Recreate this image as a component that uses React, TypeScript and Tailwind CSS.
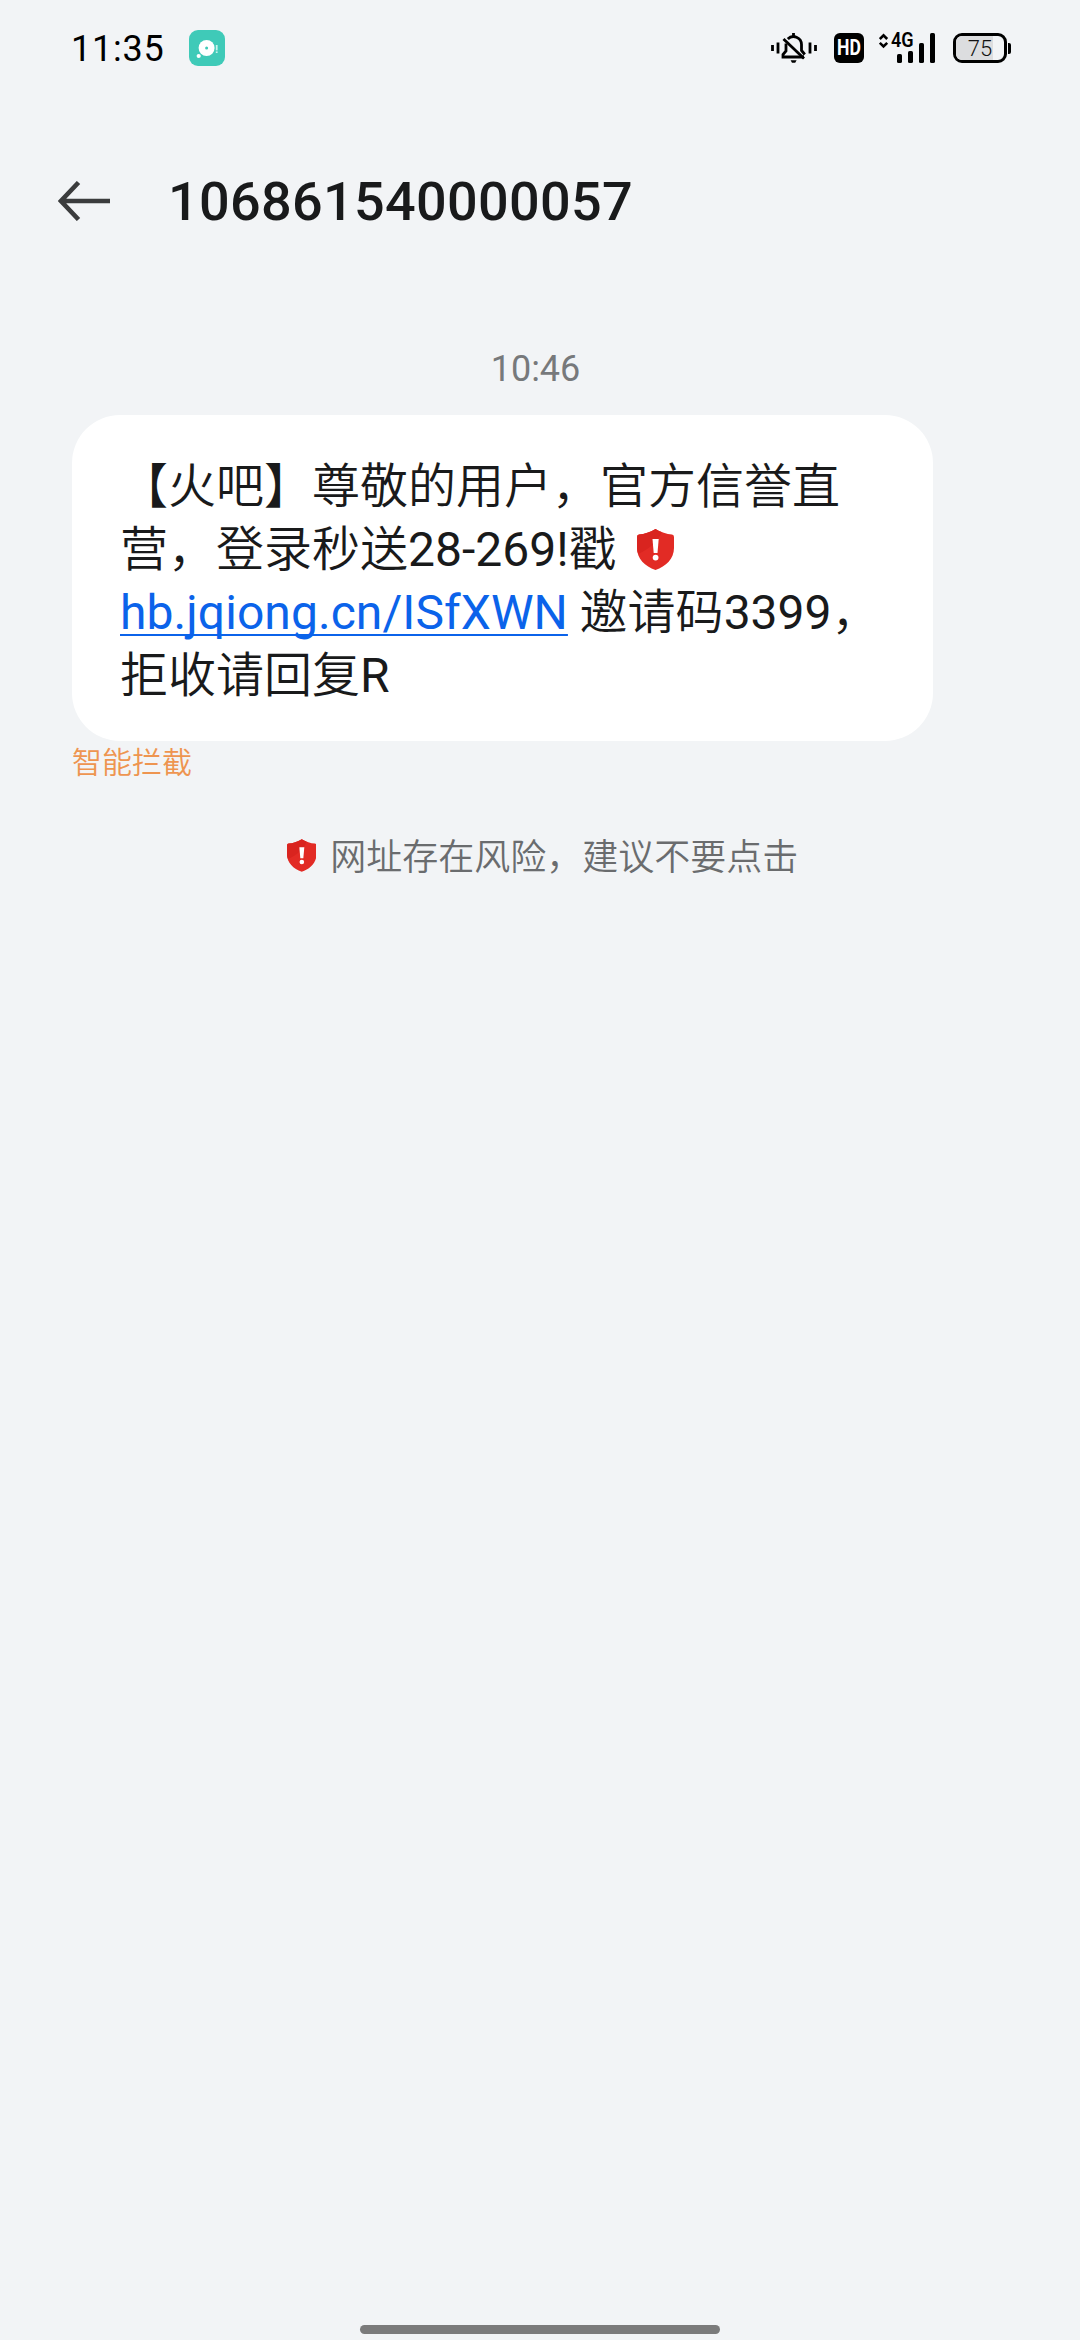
import type { ReactNode } from "react";

function AppBadge() {
  return (
    <svg className="block h-9 w-9" viewBox="0 0 36 36">
      <rect width="36" height="36" rx="9" fill="#3fcab8" />
      <circle cx="17.6" cy="18" r="8" fill="#fff" />
      <circle cx="17.6" cy="18" r="1.5" fill="#3fcab8" />
      <circle cx="9.7" cy="26" r="2.1" fill="#fff" />
      <rect x="26.8" y="15" width="1.8" height="5.4" fill="#c9f3ec" />
      <rect x="26.8" y="21.4" width="1.8" height="1.6" fill="#c9f3ec" />
    </svg>
  );
}

function BellMuted() {
  return (
    <svg className="block h-[30px] w-[46px]" viewBox="0 0 46 30" fill="none" stroke="#000" strokeWidth="2.8">
      <path d="M1.5 12v6M7 9.5v11M39 9.5v11M44.5 12v6" />
      <path d="M33 24H12v-2.5l3-3.5V10.5M16.8 6a8 8 0 0 1 13.7 5.5v6l3.3 4" />
      <path d="M22.5 0v4" />
      <path d="M12.5 6l20.5 19.5" />
      <path d="M19.6 27.2h6l-1.4 2.5h-3.2z" fill="#000" stroke="none" />
    </svg>
  );
}

function Signal() {
  return (
    <div className="relative h-[30px] w-[56px]">
      <svg className="block h-[30px] w-[56px]" viewBox="0 0 56 30">
        <path d="M0.8 6l3.7-3.7L8.2 6M0.8 9.8l3.7 3.7 3.7-3.7" fill="none" stroke="#000" strokeWidth="2.6" />
        <rect x="18" y="21" width="5" height="9" rx="1.6" />
        <rect x="29" y="18" width="5" height="12" rx="1.6" />
        <rect x="40" y="10" width="5" height="20" rx="1.6" />
        <rect x="51" y="0" width="5" height="30" rx="1.6" />
      </svg>
      <span className="absolute left-[12px] top-[-3px] origin-left scale-x-[0.86] text-[21px] font-semibold leading-[21px] text-black">
        4G
      </span>
    </div>
  );
}

function Battery() {
  return (
    <div className="flex items-center gap-px">
      <div className="relative flex h-[30px] w-[54px] overflow-hidden rounded-[9px] border-[3px] border-black">
        <div className="h-full w-[37px] bg-[#dcdddf]" />
        <span className="absolute inset-0 text-center text-[22px] font-light leading-[25px] text-[#111]">75</span>
      </div>
      <div className="h-[11px] w-[3px] rounded-r-[2px] bg-black" />
    </div>
  );
}

function Shield({ className }: { className: string }) {
  return (
    <svg className={className} viewBox="0 0 37 41">
      <path
        d="M18.5 0C24 3.2 29.5 5 35 5.6q2 .3 2 2.4v11C37 29.5 29 37.500 18.5 41C8 37.5 0 29.5 0 19V8Q0 5.9 2 5.6C7.5 5 13 3.2 18.5 0z"
        fill="#e22b25"
      />
      <path d="M18.5 0C13 3.2 7.5 5 2 5.6Q0 5.9 0 8V19q0 3 1.2 6C12 20 22 12 24.5 3C22.5 2.2 20.5 1.2 18.5 0z" fill="#d9241f" />
      <path d="M15.5 10h6.2l-1.2 14h-3.800z" fill="#fff" />
      <circle cx="18.6" cy="28.6" r="2.9" fill="#fff" />
    </svg>
  );
}

function Line({ children }: { children: ReactNode }) {
  return <div className="flex h-[63px] items-center whitespace-pre">{children}</div>;
}

export default function App() {
  return (
    <div className="flex h-[2340px] w-[1080px] flex-col bg-[#f2f4f6] font-[Roboto,'Noto_Sans_CJK_SC',sans-serif]">
      <header className="flex h-24 items-center pl-[71px] pr-[69px]">
        <span className="w-[118px] pt-px text-[36px] font-[380] leading-[44px] tracking-[0.8px] text-black">11:35</span>
        <AppBadge />
        <div className="ml-auto flex items-center">
          <BellMuted />
          <div className="ml-[17px] flex h-[30px] w-[30px] items-center justify-center rounded-[6px] bg-black text-[22px] font-bold leading-[30px] text-white">
            <span className="scale-x-[0.8]">HD</span>
          </div>
          <div className="ml-[15px]">
            <Signal />
          </div>
          <div className="ml-[18px]">
            <Battery />
          </div>
        </div>
      </header>

      <div className="mt-[57px] flex h-24 items-center pl-[58px]">
        <svg className="block h-10 w-[52px]" viewBox="0 0 52 40" fill="none" stroke="#3b3c3d" strokeWidth="4.6">
          <path d="M52 20H3M20.5 1.5L3 20l17.5 18.5" />
        </svg>
        <h1 className="ml-[58px] pt-[2px] text-[54px] font-medium leading-[64px] tracking-[0.3px] text-[#191a1b]">106861540000057</h1>
      </div>

      <main className="flex flex-1 flex-col">
        <div className="mt-[99px] pr-[9px] text-center text-[36px] leading-[42px] text-[#77797b]">10:46</div>

        <div className="ml-[72px] mt-[25px] h-[326px] w-[861px] rounded-[48px] bg-white pl-12 pt-[40px] text-[48px] font-[350] leading-[63px] text-[#191a1b]">
          <Line>【火吧】尊敬的用户，官方信誉直</Line>
          <Line>
            营，登录秒送<span className="font-normal">28-269!</span>戳
            <Shield className="ml-5 block h-[41px] w-[37px]" />
          </Line>
          <Line>
            <span className="font-normal tracking-[0.07px] text-[#0b63ea] underline decoration-[2px] underline-offset-[5px] [text-decoration-skip-ink:none]">hb.jqiong.cn/ISfXWN</span> 邀请码<span className="font-normal">3399</span>，
          </Line>
          <Line>
            拒收请回复<span className="font-normal">R</span>
          </Line>
        </div>

        <div className="ml-[72px] h-[42px] pt-px text-[30px] font-[350] leading-[42px] text-[#ee9550]">智能拦截</div>

        <div className="mt-[51px] flex items-center justify-center gap-[14px] pl-[5px] text-[36px] font-[350] leading-[44px] text-[#6a6c6e]">
          <Shield className="mb-[3px] block h-[33px] w-[29.5px]" />
          <span className="pt-[2px]">网址存在风险，建议不要点击</span>
        </div>
      </main>

      <div className="mx-auto mb-[6px] h-[9px] w-[360px] rounded-full bg-[#7b7b7b]" />
    </div>
  );
}
